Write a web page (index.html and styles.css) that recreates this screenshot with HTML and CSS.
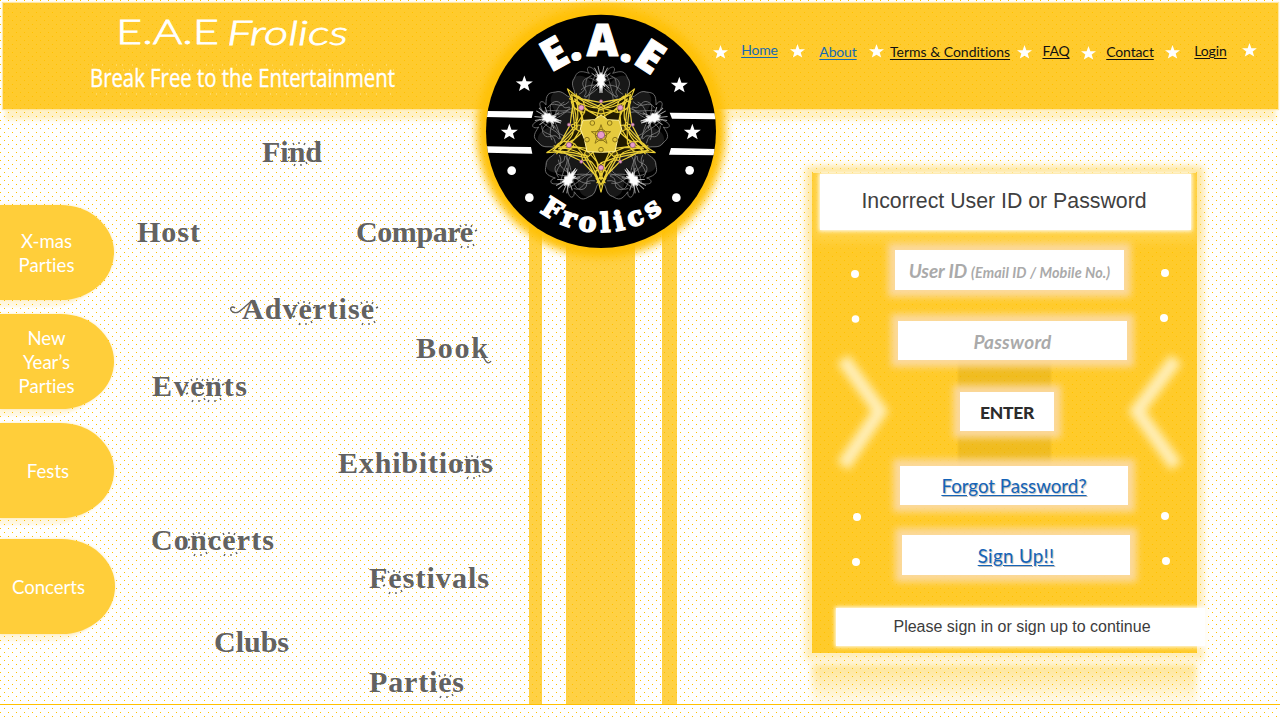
FILE: index.html
```html
<!DOCTYPE html>
<html lang="en">
<head>
<meta charset="utf-8">
<title>E.A.E Frolics</title>
<link rel="stylesheet" href="styles.css">
</head>
<body>
<svg class="defs" width="0" height="0"><defs>
  <path id="star" d="M0-8 2-2.5 8-2.4 3.4 1 5 6.5 0 3.4-5 6.5-3.4 1-8-2.4-2-2.5z"/>
</defs></svg>
<header class="header">
  <svg class="brand" width="510" height="106" viewBox="3 3 510 106">
    <text class="brand-name" x="116" y="44" textLength="103" lengthAdjust="spacingAndGlyphs">E.A.E</text>
    <text class="brand-name slanted" x="227" y="45" textLength="121" lengthAdjust="spacingAndGlyphs">Frolics</text>
    <text class="tagline" x="90" y="87" textLength="305" lengthAdjust="spacingAndGlyphs">Break Free to the Entertainment</text>
    <path class="sparkle" d="M92 65H390M99 70H394M96 94H392"/>
  </svg>
  <nav class="nav">
    <svg class="star" viewBox="-8 -8 16 16"><use href="#star"/></svg>
    <a class="link blue raised" href="#">Home</a>
    <svg class="star raised" viewBox="-8 -8 16 16"><use href="#star"/></svg>
    <a class="link blue" href="#">About</a>
    <svg class="star raised" viewBox="-8 -8 16 16"><use href="#star"/></svg>
    <a class="link wide" href="#">Terms &amp; Conditions</a>
    <svg class="star" viewBox="-8 -8 16 16"><use href="#star"/></svg>
    <a class="link lifted" href="#">FAQ</a>
    <svg class="star lowered" viewBox="-8 -8 16 16"><use href="#star"/></svg>
    <a class="link" href="#">Contact</a>
    <svg class="star" viewBox="-8 -8 16 16"><use href="#star"/></svg>
    <a class="link lifted" href="#">Login</a>
    <svg class="star high" viewBox="-8 -8 16 16"><use href="#star"/></svg>
  </nav>
</header>
<main class="main">
  <aside class="side">
    <a class="pill">X-mas<br>Parties</a>
    <a class="pill">New<br>Year’s<br>Parties</a>
    <a class="pill">Fests</a>
    <a class="pill last">Concerts</a>
  </aside>
  <svg class="words" width="409" height="595" viewBox="120 109 409 595">
    <defs><path id="rays" d="M-5-9-6-11M0-10V-12M5-9 6-11M9-5 11-6M-9-4-11-5M-9 3-11 4M-4 10-5 12M2 10V12M7 8 8 10"/></defs>
    <text x="262" y="162" textLength="60">Find</text>
    <text x="137" y="242" textLength="63">Host</text>
    <text x="356" y="242" textLength="117">Compare</text>
    <text x="242" y="319" textLength="132">Advertise</text>
    <path d="M253 300C243 307 239 315 233 312C228 309 232 305 235 308"/>
    <text x="416" y="358" textLength="72">Book</text>
    <path d="M482 353C484 360 488 366 491 361"/>
    <text x="152" y="396" textLength="95">Events</text>
    <text x="338" y="473" textLength="155">Exhibitions</text>
    <text x="151" y="550" textLength="123">Concerts</text>
    <text x="369" y="588" textLength="120">Festivals</text>
    <text x="214" y="652" textLength="75">Clubs</text>
    <text x="369" y="692" textLength="95">Parties</text>
    <use href="#rays" x="299" y="154"/><use href="#rays" x="466" y="236"/><use href="#rays" x="304" y="313"/><use href="#rays" x="367" y="313"/><use href="#rays" x="197" y="390"/><use href="#rays" x="213" y="390"/><use href="#rays" x="472" y="467"/><use href="#rays" x="199" y="544"/><use href="#rays" x="229" y="544"/><use href="#rays" x="394" y="582"/><use href="#rays" x="445" y="686"/>
  </svg>
  <div class="stripes"><i></i><i></i><i></i></div>
  <section class="panel">
    <svg class="decor" width="385" height="480" viewBox="812 173 385 480">
      <rect class="shade" x="958" y="355" width="93" height="112"/>
      <g class="chevron"><path d="M843 359 880 411 843 466"/><path d="M1176 359 1137 411 1176 466"/></g>
      <g class="dots"><circle cx="855" cy="274" r="4"/><circle cx="855.500" cy="319" r="3.800"/><circle cx="857" cy="517" r="4"/><circle cx="856" cy="562" r="4"/><circle cx="1165" cy="273" r="4"/><circle cx="1164" cy="318" r="4"/><circle cx="1165" cy="516" r="4"/><circle cx="1166" cy="561" r="4"/></g>
    </svg>
    <div class="notice">Incorrect User ID or Password</div>
    <div class="field user"><span>User ID <small>(Email ID / Mobile No.)</small></span></div>
    <div class="field pass"><span>Password</span></div>
    <button class="enter">ENTER</button>
    <a class="action forgot" href="#">Forgot Password?</a>
    <a class="action signup" href="#">Sign Up!!</a>
    <div class="prompt">Please sign in or sign up to continue</div>
    <div class="reflection"></div>
  </section>
</main>
<svg class="logo" width="260" height="270" viewBox="0 0 780 810">
  <defs>
    <clipPath id="disc"><ellipse cx="393" cy="394" rx="345" ry="350"/></clipPath>
    <path id="arc" d="M205 632A303 303 0 0 0 610 604"/>
    <g id="web">
      <path class="haze" d="M0-125C-30-155-45-190-80-173C-98-155-75-135-80-120C-60-95-30-100 0-60C30-100 60-95 80-120C75-135 98-155 80-173C45-190 30-155 0-125"/>
      <g class="wisps"><path d="M0-170C-35-225-50-200-35-185C-65-195-72-190-80-170C-95-150-75-135-80-120C-60-95-40-110-25-100"/><path d="M0-170C35-225 50-200 35-185C65-195 72-190 80-170C95-150 75-135 80-120C60-95 40-110 25-100"/><path d="M0-150C-25-170-40-180-52-163S-35-135-48-120-20-125 0-150C-30-150-45-150-60-135M-12-190C-35-150-25-125-50-108M-8-160C-20-130-40-130-36-98M0-150C25-170 40-180 52-163S35-135 48-120 20-125 0-150C30-150 45-150 60-135M12-190C35-150 25-125 50-108M8-160C20-130 40-130 36-98M-28-178C-60-170-30-140-66-122M28-178C60-170 30-140 66-122"/></g>
      <path class="burst" d="M0-165-20-202M0-165-9-207M0-165 9-207M0-165 20-202M0-165-28-185M0-165 28-185M0-165-25-140M0-165 25-140"/>
      <path class="flare" d="M0-188 5-180 13-182 10-173 15-166 8-159 12-145 5-149 3-126 0-142-3-126-5-149-12-145-8-159-15-166-10-173-13-182-5-180z"/>
    </g>
    <g id="gold">
      <path d="M0 48-36 25-52 62-8 139 0 172 8 139 52 62 36 25zM-48 57-25 95 0 150 25 95 48 57M-38 50-13 80 0 135 13 80 38 50M-30 35C-25 65 0 90 0 118C0 90 25 65 30 35M-58 78C-25 62-18 102 0 119C18 102 25 62 58 78M-58 78-28 110-13 125M58 78 28 110 13 125M-52 62-80 25M-8 139C-22 129-18 100 0 84M8 139C22 129 18 100 0 84M0 119-13 145M0 119 13 145"/>
    </g>
  </defs>
  <ellipse class="aura" cx="393" cy="394" rx="374" ry="378"/>
  <ellipse cx="393" cy="394" rx="345" ry="350"/>
  <g clip-path="url(#disc)" class="white">
    <path d="M45 333 190 334 185 354 45 351zM45 439 183 441 187 461 45 458zM599 338 740 340V358L606 356zM603 444 740 447V466L597 464z"/>
  </g>
  <g transform="translate(393 405)">
    <use href="#web"/><use href="#web" transform="rotate(72)"/><use href="#web" transform="rotate(144)"/><use href="#web" transform="rotate(216)"/><use href="#web" transform="rotate(288)"/>
    <g class="gold"><use href="#gold"/><use href="#gold" transform="rotate(72)"/><use href="#gold" transform="rotate(144)"/><use href="#gold" transform="rotate(216)"/><use href="#gold" transform="rotate(288)"/></g>
    <path class="core" d="M0-60 20-46 54-44 62-18 50 12 42 50 0 52-42 50-50 12-62-18-54-44-20-46z"/>
    <g class="lace"><circle r="17"/><circle cy="44" r="7"/><circle cx="42" cy="14" r="7"/><circle cx="26" cy="-36" r="7"/><circle cx="-26" cy="-36" r="7"/><circle cx="-42" cy="14" r="7"/><path d="M0-31 18 25-29-10H29L-18 25z"/></g>
    <g class="gems"><circle r="11"/><circle cx="-59" cy="-82" r="8"/><circle cx="58" cy="-82" r="8"/><circle cx="-96" cy="30" r="8"/><circle cx="95" cy="30" r="8"/><circle cy="98" r="8"/><circle cy="-101" r="5"/><circle cx="-96" cy="-31" r="5"/><circle cx="95" cy="-31" r="5"/><circle cx="-59" cy="80" r="5"/><circle cx="58" cy="80" r="5"/></g>
  </g>
  <g class="white">
    <use href="#star" transform="translate(163 252) scale(3.2)"/><use href="#star" transform="translate(118 397) scale(3.2)"/><use href="#star" transform="translate(628 256) scale(3.2)"/><use href="#star" transform="translate(667 397) scale(3.2)"/>
    <circle cx="125" cy="512" r="13"/><circle cx="178" cy="593" r="13"/><circle cx="659" cy="511" r="13"/><circle cx="619" cy="593" r="13"/>
    <text class="logo-top" x="243 303 350 446 486" y="218 184 169 181 188" rotate="-29 -12 0 12 33">E.A.E</text>
    <text class="logo-bottom"><textPath href="#arc" startOffset="4" textLength="398">Frolics</textPath></text>
  </g>
</svg>
</body>
</html>
```
FILE: styles.css
```css
* { box-sizing: border-box; }
body {
  margin: 0;
  width: 1280px;
  height: 720px;
  position: relative;
  overflow: hidden;
  font-family: Lato, sans-serif;
  font-variant-ligatures: none;
  background-color: #fff;
  background-image: conic-gradient(from 270deg at 1px 1px, #ffc000 90deg, transparent 0), conic-gradient(from 270deg at 1px 1px, #ffc000 90deg, transparent 0);
  background-size: 8px 8px;
  background-position: 0 0, 4px 4px;
}
.defs { position: absolute; }
.header {
  display: flex;
  height: 106px;
  margin: 3px 2px 0 3px;
  background: rgba(255, 192, 0, .82);
  box-shadow: 0 0 1px 1px rgba(255, 226, 145, .8), 0 13px 4px -2px rgba(255, 192, 0, .22);
}
.brand { flex: none; fill: #fff; }
.brand-name { font: 300 34px Lato, sans-serif; stroke: #fff; stroke-width: .8; }
.slanted { font-style: italic; }
.tagline { font: 400 25px "Open Sans", sans-serif; stroke: #fff; stroke-width: .4; }
.sparkle { fill: none; stroke: #fff; stroke-width: 1; stroke-dasharray: 1 9 1 13 1 5; opacity: .5; }
.nav {
  display: grid;
  grid-template-columns: 12px 67px 8px 74px 2px 146px 2px 62px 2px 82px 3px 73px 4px;
  justify-items: center;
  margin-left: 201px;
  padding-top: 42px;
  align-items: start;
  height: 70px;
}
.star { width: 15px; height: 15px; fill: #fff; margin: 0 -8px; }
.star.raised { margin-top: -1px; }
.star.high { margin-top: -2px; }
.star.lowered { margin-top: 1px; }
.link {
  margin-top: -2px;
  font-size: 14px;
  line-height: 17px;
  letter-spacing: -.15px;
  color: #111;
  white-space: nowrap;
  text-decoration: underline;
  text-underline-offset: 2px;
}
.link.wide { letter-spacing: 0; }
.link.blue { color: #1769b0; }
.link.raised { margin-top: -4px; }
.link.lifted { margin-top: -3px; }
.main { display: flex; height: 596px; border-bottom: 1px solid #ffc000; }
.side { width: 120px; flex: none; padding-top: 96px; display: flex; flex-direction: column; gap: 14px; }
.pill {
  width: 114px;
  height: 95px;
  flex: none;
  padding: 0 21px 0 0;
  display: flex;
  align-items: center;
  justify-content: center;
  text-align: center;
  color: #fff;
  font-size: 18.6px;
  line-height: 24px;
  background: #ffce3a;
  border-radius: 0 54px 54px 0 / 0 48px 48px 0;
  box-shadow: 0 0 3px rgba(255, 192, 0, .3), -10px 9px 3px -2px rgba(255, 192, 0, .12);
}
.pill:nth-child(3) { padding: 1px 18px 0 0; }
.pill.last { margin-top: 7px; width: 115px; padding: 1px 18px 0 0; }
.words { flex: none; fill: #626262; }
.words text { font: 700 30px "Liberation Serif", serif; }
.words path { fill: none; stroke: #626262; stroke-width: 1.4; }
.stripes { display: grid; grid-template-columns: 13px 69px 15px; column-gap: 24px; width: 148px; flex: none; }
.stripes i { background: rgba(255, 192, 0, .73); }
.stripes i:last-child { margin: 0 -3px 0 3px; }
.panel {
  position: relative;
  width: 385px;
  height: 480px;
  margin: 64px 0 0 135px;
  padding-top: 1px;
  background: rgba(255, 192, 0, .83);
  box-shadow: 0 0 6px 7px rgba(255, 205, 60, .34);
}
.decor { position: absolute; inset: 0; }
.shade { fill: rgba(195, 145, 0, .25); filter: blur(1px); }
.chevron { fill: none; stroke: #ffeeb8; stroke-width: 14; filter: blur(4px); }
.dots { fill: #fff; filter: blur(.4px); }
.notice, .field, .enter, .action, .prompt { position: relative; display: flex; align-items: center; justify-content: center; background: #fff; }
.notice {
  width: 371px;
  height: 56px;
  margin-left: 8px;
  padding: 0 3px 1px 0;
  font: 21.3px "Liberation Sans", sans-serif;
  color: #404040;
  box-shadow: 0 0 4px 1px #fff, 0 3px 10px 8px rgba(255, 219, 105, .5);
}
.field, .enter, .action { box-shadow: 0 0 7px 7px rgba(251, 218, 164, .94); }
.field { width: 229px; height: 40px; color: #aaa; font-size: 19px; font-style: italic; font-weight: 700; letter-spacing: -.1px; padding-top: 1px; }
.field small { font-size: 14.4px; letter-spacing: .1px; }
.user { margin: 20px 0 0 83px; }
.pass { margin: 31px 0 0 86px; height: 39px; font-size: 19px; }
.pass span { letter-spacing: .25px; }
.enter { width: 94px; height: 39px; margin: 32px 0 0 148px; border: 0; padding: 1px 0 0; font: 900 17.5px Lato, sans-serif; letter-spacing: -.3px; color: #2c2c2c; }
.action { width: 228px; height: 39px; color: #1464b8; font-size: 18.7px; text-underline-offset: 2px; text-shadow: 1px 1px 1px #bbb; }
.forgot { margin: 35px 0 0 88px; }
.signup { margin: 30px 0 0 90px; height: 40px; letter-spacing: .35px; padding-top: 1px; }
.prompt { width: 369px; height: 38px; margin: 33px 0 0 24px; font: 16px "Liberation Sans", sans-serif; color: #3c3c3c; padding: 0 0 0 3px; box-shadow: 0 0 4px 1px #fff; }
.reflection { height: 42px; margin: 18px 0 0; background: linear-gradient(rgba(255, 192, 0, .42), rgba(255, 192, 0, .05)); filter: blur(3px); }
.logo { position: absolute; left: 470px; top: 0; overflow: visible; }
.aura { fill: #ffc107; filter: blur(13px); }
.white { fill: #fff; }
.haze { fill: rgba(170, 170, 170, .14); }
.wisps { fill: none; stroke: #aaa; stroke-width: 2.2; opacity: .75; }
.burst { stroke: #ccc; stroke-width: 3; opacity: .8; }
.flare { fill: #fff; stroke: #ddd; stroke-width: 2; }
.gold { fill: rgba(145, 120, 0, .22); stroke: #e9ce36; stroke-width: 3.6; }
.core { fill: #e5ca3d; stroke: #fff09a; stroke-width: 3; }
.lace { fill: none; stroke: #8c7518; stroke-width: 3; }
.gems { fill: #ea9ccb; stroke: #80516c; stroke-width: 2; }
.logo-top { font: 800 130px "Open Sans", sans-serif; stroke: #fff; stroke-width: 3; stroke-linejoin: round; }
.logo-bottom { font: 700 80px "DejaVu Serif", serif; stroke: #fff; stroke-width: 5; }
```
